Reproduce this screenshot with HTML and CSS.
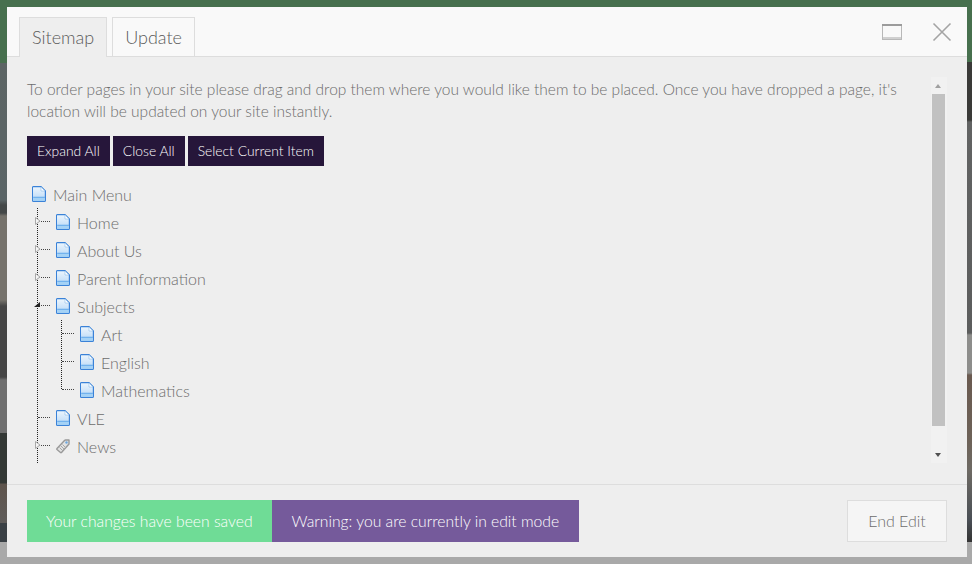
FILE: index.html
```html
<!DOCTYPE html>
<html>
<head>
  <meta charset="utf-8">
  <link rel="stylesheet" href="styles.css">
</head>
<body>
  <div class="modal">
    <div class="modal-header">
      <div class="tabs">
        <div class="tab active">Sitemap</div>
        <div class="tab">Update</div>
      </div>
      <div class="window-controls">
        <svg class="ctrl-max" width="20" height="16" viewBox="0 0 20 16">
          <rect x="0.5" y="0.5" width="19" height="15" fill="none" stroke="#b8b8b8"/>
          <rect x="0" y="0" width="20" height="2" fill="#9c9c9c"/>
          <rect x="1" y="13" width="18" height="2" fill="#d0d0d0"/>
        </svg>
        <svg class="ctrl-close" width="20" height="20" viewBox="0 0 20 20">
          <path d="M1.5 1.5L18.5 18.5M18.5 1.5L1.5 18.5" stroke="#a4a4a4" stroke-width="1.6" fill="none"/>
        </svg>
      </div>
    </div>

    <div class="modal-body">
      <div class="content">
        <p class="intro">To order pages in your site please drag and drop them where you would like them to be placed. Once you have dropped a page, it's location will be updated on your site instantly.</p>
        <div class="buttons">
          <button>Expand All</button>
          <button>Close All</button>
          <button>Select Current Item</button>
        </div>

        <div class="tree">
          <div class="node root">
            <svg class="icon"><use href="#page"/></svg>
            <span>Main Menu</span>
          </div>
          <ul class="branch">
            <li>
              <svg class="toggle" width="6" height="8"><path d="M.5 .5L5 4L.5 7.500z" fill="#f4f4f4" stroke="#a8a8a8"/></svg>
              <div class="node"><svg class="icon"><use href="#page"/></svg><span>Home</span></div>
            </li>
            <li>
              <svg class="toggle" width="6" height="8"><path d="M.5 .5L5 4L.5 7.500z" fill="#f4f4f4" stroke="#a8a8a8"/></svg>
              <div class="node"><svg class="icon"><use href="#page"/></svg><span>About Us</span></div>
            </li>
            <li>
              <svg class="toggle" width="6" height="8"><path d="M.5 .5L5 4L.5 7.500z" fill="#f4f4f4" stroke="#a8a8a8"/></svg>
              <div class="node"><svg class="icon"><use href="#page"/></svg><span>Parent Information</span></div>
            </li>
            <li class="open">
              <div class="node"><svg class="icon"><use href="#page"/></svg><span>Subjects</span></div>
              <ul class="branch sub">
                <li><div class="node"><svg class="icon"><use href="#page"/></svg><span>Art</span></div></li>
                <li><div class="node"><svg class="icon"><use href="#page"/></svg><span>English</span></div></li>
                <li><div class="node"><svg class="icon"><use href="#page"/></svg><span>Mathematics</span></div></li>
              </ul>
            </li>
            <li><div class="node"><svg class="icon"><use href="#page"/></svg><span>VLE</span></div></li>
            <li>
              <svg class="toggle" width="6" height="8"><path d="M.5 .5L5 4L.5 7.500z" fill="#f4f4f4" stroke="#a8a8a8"/></svg>
              <div class="node">
                <svg class="icon" viewBox="0 0 14 16">
                  <path d="M1 10.500L8.500 2.500Q9 2 9.500 2H13V6L5.500 14.500Q5 15 4.500 14.500L1 11.500Q.5 11 1 10.500z" fill="#e2e2e2" stroke="#999999" stroke-width="1.400" stroke-linejoin="round"/>
                  <path d="M3.500 9.500L7 13M5 8L8.500 11.500M6.500 6.500L10 10" stroke="#a6a6a6" fill="none"/>
                  <circle cx="10.500" cy="4.500" r="1.200" fill="#6ea8e0"/>
                </svg>
                <span>News</span>
              </div>
            </li>
          </ul>
        </div>
      </div>

      <div class="scrollbar">
        <div class="scroll-up"></div>
        <div class="scroll-track"><div class="scroll-thumb"></div></div>
        <div class="scroll-down"></div>
      </div>
    </div>

    <div class="modal-footer">
      <div class="notices">
        <div class="notice saved">Your changes have been saved</div>
        <div class="notice warning">Warning: you are currently in edit mode</div>
      </div>
      <button class="end-edit">End Edit</button>
    </div>
  </div>

  <svg class="defs" width="0" height="0">
    <defs>
      <linearGradient id="pageFill" x1="0" y1="0" x2="0" y2="1">
        <stop offset="0" stop-color="#eef6fd"/>
        <stop offset="0.7" stop-color="#c6e0f8"/>
      </linearGradient>
      <symbol id="page" viewBox="0 0 14 16">
        <path d="M1.500 .6H9L13.400 5V14.400a1 1 0 0 1-1 1h-11a1 1 0 0 1-1-1V1.600a1 1 0 0 1 1-1z" fill="url(#pageFill)" stroke="#3a82d8" stroke-width="1.200"/>
        <path d="M9 1V5H13z" fill="#ffffff" stroke="#8dbcea" stroke-width=".6"/>
        <rect x="1.200" y="10.800" width="11.600" height="1" fill="#4f9fe8"/>
        <rect x="1.200" y="11.800" width="11.600" height="3" fill="#a4d2f6"/>
      </symbol>
    </defs>
  </svg>
</body>
</html>
```

FILE: styles.css
```css
:root {
  --panel: #eeeeee;
  --line: #dddddd;
  --text: #6c6c6c;
  --dark: #26163a;
}

body {
  margin: 0;
  padding: 7px 5px 7px 7px;
  box-sizing: border-box;
  height: 564px;
  overflow: hidden;
  font-family: "Lato", sans-serif;
  font-weight: 300;
  color: var(--text);
  background:
    linear-gradient(to bottom, #47704e 63px, #5c6464 63px, #5a6466 200px, #444848 205px, #444848 213px, #75726b 216px, #75726b 300px, #454545 306px, #454545 377px, #6f6f6f 380px, #6f6f6f 433px, #333835 433px, #333835 483px, #5e544c 484px, #5f5c5a 523px, #3a4045 523px, #3a4045 542px, #a9a9a9 542px) left top / 7px 100% no-repeat,
    linear-gradient(to bottom, #47704e 62px, #3a3a38 62px, #3a3a38 120px, #626363 122px, #5c5d5d 333px, #8d8d8b 335px, #8d8d8b 373px, #6a5a50 375px, #6d6258 440px, #6e6a64 470px, #4a4f55 520px, #333333 542px, #a9a9a9 542px) right top / 5px 100% no-repeat,
    linear-gradient(to bottom, #47704e 50%, #a9a9a9 50%);
}

.defs {
  position: absolute;
}

.modal {
  width: 960px;
  height: 550px;
  display: flex;
  flex-direction: column;
  background: var(--panel);
}

.modal-header {
  height: 49px;
  flex: none;
  display: flex;
  justify-content: space-between;
  background: #f9f9f9;
  border-bottom: 1px solid var(--line);
}

.tabs {
  display: flex;
  align-items: flex-end;
  gap: 5px;
  padding-left: 12px;
}

.tab {
  height: 39px;
  box-sizing: border-box;
  padding: 0 12px;
  line-height: 38px;
  font-size: 18px;
  color: #5a5a5a;
  border: 1px solid var(--line);
  border-bottom: none;
}

.tab.active {
  margin-bottom: -1px;
  height: 40px;
  background: var(--panel);
}

.window-controls {
  display: flex;
  align-items: flex-start;
  gap: 30px;
  padding: 15px 15px 0 0;
}

.ctrl-max {
  margin-top: 2px;
}

.modal-body {
  flex: 1;
  min-height: 0;
  display: flex;
  justify-content: space-between;
}

.content {
  padding: 21px 0 0 20px;
  flex: 1;
  overflow: hidden;
}

.intro {
  margin: 0 16px 0 0;
  font-size: 15.500px;
  line-height: 22px;
}

.buttons {
  display: flex;
  gap: 3px;
  margin-top: 14px;
}

.buttons button {
  height: 30px;
  padding: 0 10px 2px;
  border: none;
  background: var(--dark);
  color: #ffffff;
  font-family: "Lato", sans-serif;
  font-size: 13.900px;
  font-weight: 300;
}

.tree {
  margin-top: 14px;
  font-size: 16px;
}

.node {
  height: 28px;
  display: flex;
  align-items: center;
  gap: 7px;
}

.node .icon {
  width: 14px;
  height: 16px;
  flex: none;
}

.root {
  padding-left: 5px;
}

.branch {
  list-style: none;
  margin: 0 0 0 10px;
  padding: 0;
  border-left: 1px dotted #222222;
  height: 255px;
}

.branch li {
  position: relative;
  padding-left: 18px;
}

.branch li::before {
  content: "";
  position: absolute;
  left: 0;
  top: 13px;
  width: 12px;
  border-top: 1px dotted #444444;
}

.toggle {
  position: absolute;
  left: -3px;
  top: 9px;
}

.open::after {
  content: "";
  position: absolute;
  left: -4px;
  top: 10px;
  border-right: 6px solid #222222;
  border-top: 5px solid transparent;
}

.branch.sub {
  margin-left: 5px;
  height: 69px;
  margin-bottom: 15px;
}

.scrollbar {
  width: 16px;
  flex: none;
  margin: 20px 20px 0 0;
  display: flex;
  flex-direction: column;
  height: 386px;
  background: #f1f1f1;
}

.scroll-up,
.scroll-down {
  height: 17px;
  flex: none;
  position: relative;
}

.scroll-up::after {
  content: "";
  position: absolute;
  left: 4px;
  top: 7px;
  border-left: 3.500px solid transparent;
  border-right: 3.500px solid transparent;
  border-bottom: 4px solid #a0a0a0;
}

.scroll-down::after {
  content: "";
  position: absolute;
  left: 4px;
  top: 7px;
  border-left: 3.500px solid transparent;
  border-right: 3.500px solid transparent;
  border-top: 4px solid #505050;
}

.scroll-track {
  flex: 1;
}

.scroll-thumb {
  height: 332px;
  width: 13px;
  margin-left: 1px;
  background: #c1c1c1;
}

.modal-footer {
  height: 73px;
  flex: none;
  box-sizing: border-box;
  border-top: 1px solid var(--line);
  padding: 15px 20px 0 20px;
  display: flex;
  justify-content: space-between;
  align-items: flex-start;
}

.notices {
  display: flex;
}

.notice {
  height: 42px;
  line-height: 42px;
  padding: 0 20px;
  font-size: 15.700px;
  color: #ffffff;
}

.saved {
  padding: 0 19px;
  background: #6fdc96;
}

.warning {
  background: #755a9b;
}

.end-edit {
  width: 100px;
  height: 42px;
  padding-bottom: 2px;
  background: #f5f5f5;
  border: 1px solid var(--line);
  color: #6c6c6c;
  font-family: "Lato", sans-serif;
  font-weight: 300;
  font-size: 16px;
}
```
